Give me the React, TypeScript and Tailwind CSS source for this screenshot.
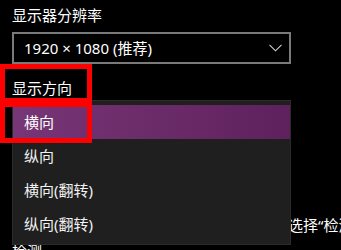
import React from "react";

const FONT = { fontFamily: '"Noto Sans", "Noto Sans CJK SC", sans-serif' };

const ORIENTATIONS = ["横向", "纵向", "横向(翻转)", "纵向(翻转)"];

function Chevron() {
  return (
    <svg width="13" height="8" viewBox="0 0 13 8" fill="none">
      <path d="M0.5 0.8 L6.5 6.8 L12.5 0.8" stroke="#cfcfcf" strokeWidth="1.1" />
    </svg>
  );
}

export default function App() {
  return (
    <div className="relative h-[250px] w-[341px] overflow-hidden bg-black text-white" style={FONT}>
      {/* settings page underneath */}
      <div className="pl-3 pt-[5px]">
        <div className="text-[15px] leading-[20px]">显示器分辨率</div>
        <div className="mt-[7px] flex h-[32px] w-[279px] items-center justify-between border-2 border-[#7a7a7a] pl-[10px] pr-[7px]">
          <span className="text-[15px] leading-[20px]">1920 × 1080 (推荐)</span>
          <Chevron />
        </div>
        <div className="mt-[14px] text-[15px] leading-[20px]">显示方向</div>
        <div className="mt-[6px] flex h-[32px] w-[279px] items-center justify-between border-2 border-[#7a7a7a] pl-[10px] pr-[7px]">
          <span className="text-[15px] leading-[20px]">横向</span>
          <Chevron />
        </div>
        <div className="mt-[30px] text-[20px] leading-[28px]">多显示器</div>
        <div className="mt-[21px] whitespace-nowrap pl-[21px] text-[15px] leading-[20px]">
          较旧的显示器可能不会始终自动连接。选择“检测”即可尝试连接到它们。
        </div>
        <div className="mt-[6px] whitespace-nowrap text-[15px] leading-[20px]">检测</div>
      </div>

      {/* open orientation menu */}
      <div className="absolute left-[12px] top-[100px] h-[145px] w-[279px] border border-[#2b2b2b] bg-[#1f1f1f] py-[4px]">
        {ORIENTATIONS.map((o, i) => (
          <div
            key={o}
            className={
              i === 0
                ? "flex h-[34px] items-center bg-gradient-to-r from-[#773676] to-[#5f215d] pl-[11px] text-[15px] text-white"
                : "flex h-[34px] items-center pl-[11px] text-[15px] text-[#f2f2f2]"
            }
          >
            {o}
          </div>
        ))}
      </div>

      {/* red annotation boxes */}
      <div className="absolute left-0 top-[64px] h-[39px] w-[92px] border-[5px] border-[#ff0000]" />
      <div className="absolute left-0 top-[102px] h-[41px] w-[92px] border-[5px] border-[#ff0000]" />
    </div>
  );
}
